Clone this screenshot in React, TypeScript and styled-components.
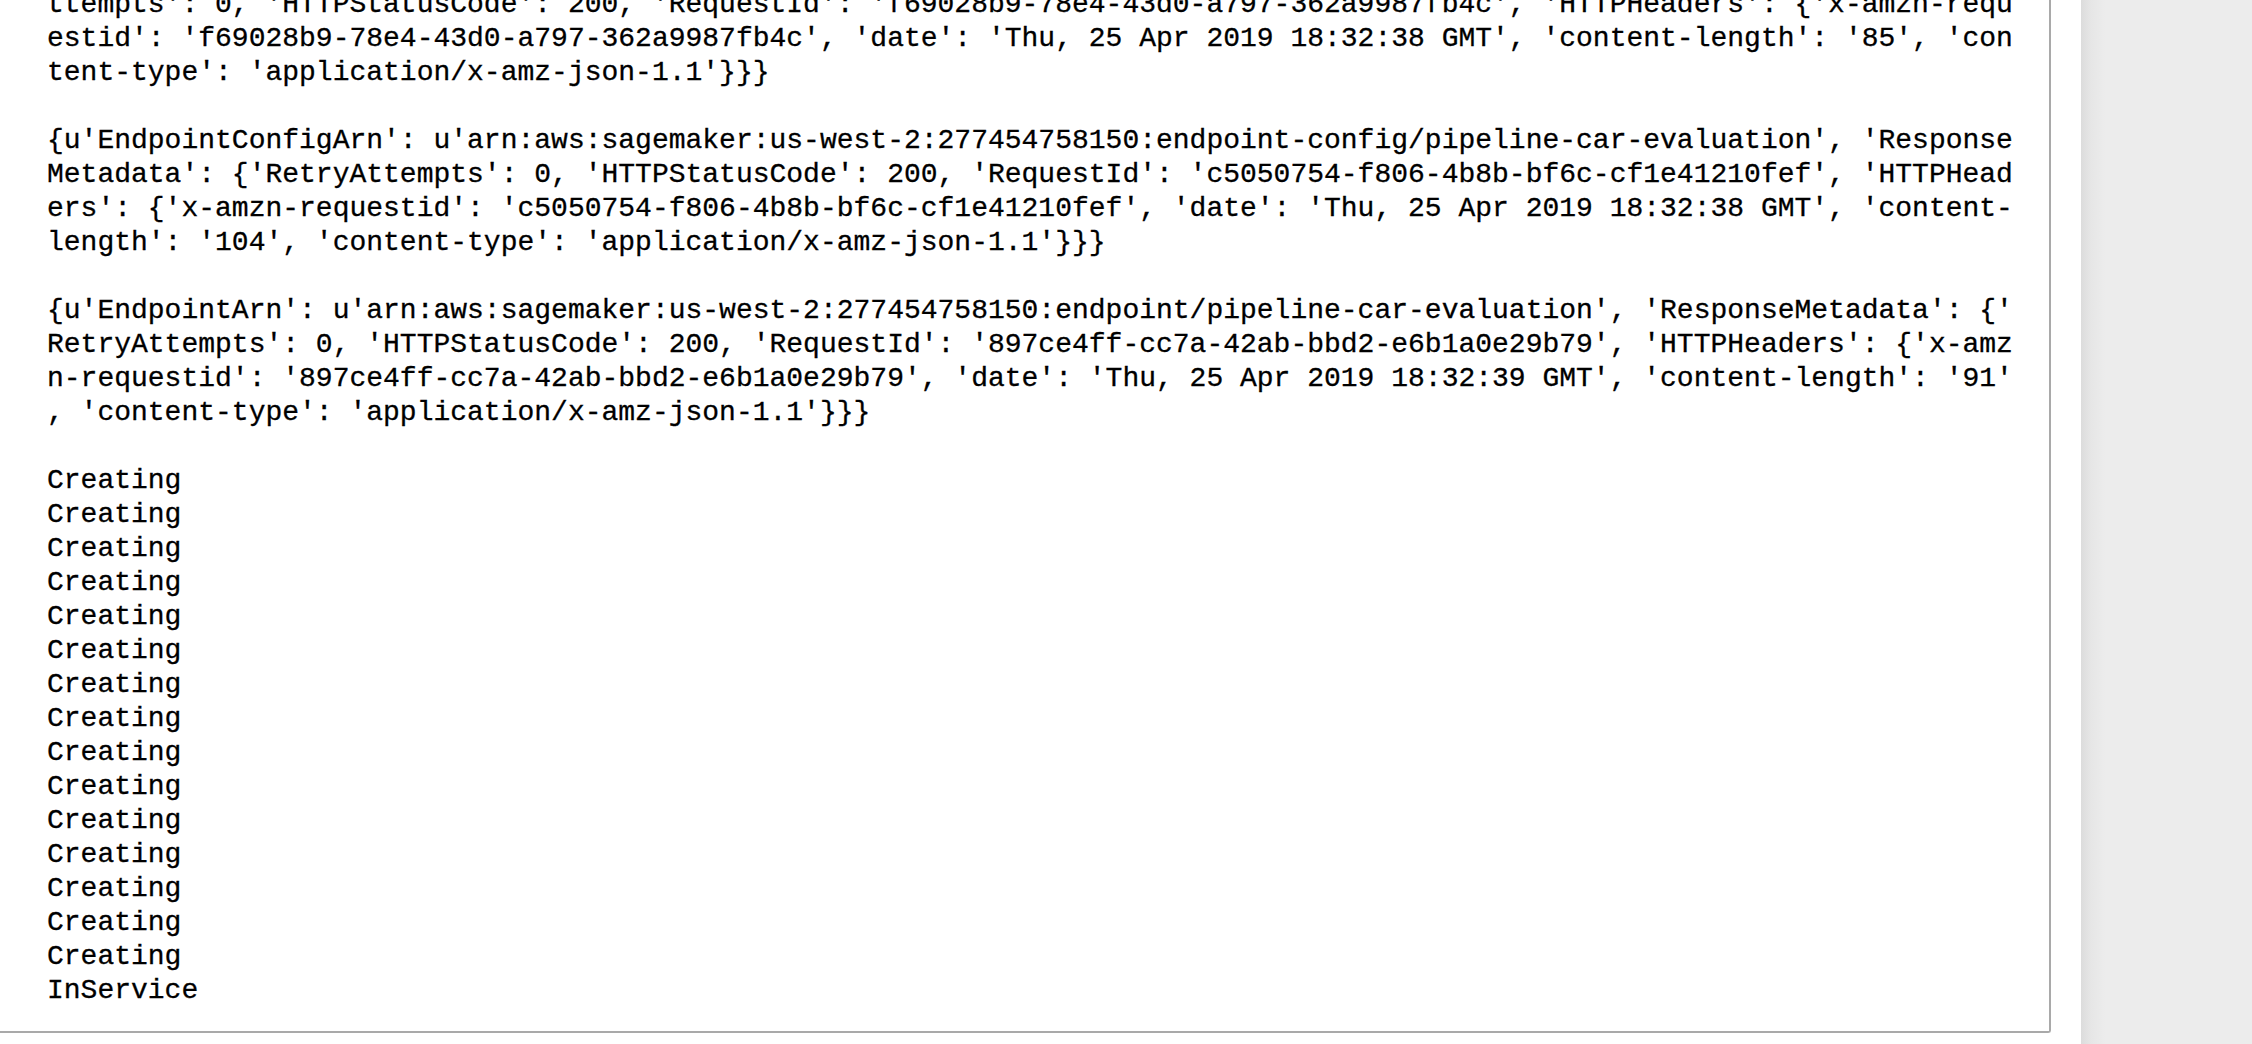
import React from "react";
import styled, { createGlobalStyle } from "styled-components";

const GlobalStyle = createGlobalStyle`
  html, body {
    margin: 0;
    padding: 0;
    background: #ffffff;
    overflow: hidden;
  }
`;

const Page = styled.div`
  display: flex;
  flex-direction: row;
  width: 2252px;
  height: 1044px;
  background: #ffffff;
  overflow: hidden;
`;

const OutputPanel = styled.section`
  flex: 0 0 2051px;
  height: 1033px;
  box-sizing: border-box;
  border-right: 2px solid #a9a9a9;
  border-bottom: 2px solid #a9a9a9;
  border-bottom-right-radius: 3px;
  background: #ffffff;
  overflow: hidden;
`;

const OutputScroll = styled.div`
  display: flex;
  flex-direction: column;
  gap: 34px;
  margin-top: -12px;
  padding-left: 47px;
`;

const OutputBlock = styled.pre`
  margin: 0;
  font-family: "Liberation Mono", "Courier New", monospace;
  font-size: 28px;
  line-height: 34px;
  color: #000000;
  white-space: pre;
  -webkit-text-stroke: 0.3px #000000;
`;

const Gutter = styled.div`
  flex: 0 0 30px;
`;

const SideBar = styled.aside`
  flex: 1 1 auto;
  height: 100%;
  background: linear-gradient(to right, #dcdcdc 0px, #e6e6e6 10px, #ececec 24px, #ececec 100%);
`;

const blocks: string[][] = [
  [
    "ttempts': 0, 'HTTPStatusCode': 200, 'RequestId': 'f69028b9-78e4-43d0-a797-362a9987fb4c', 'HTTPHeaders': {'x-amzn-requ",
    "estid': 'f69028b9-78e4-43d0-a797-362a9987fb4c', 'date': 'Thu, 25 Apr 2019 18:32:38 GMT', 'content-length': '85', 'con",
    "tent-type': 'application/x-amz-json-1.1'}}}",
  ],
  [
    "{u'EndpointConfigArn': u'arn:aws:sagemaker:us-west-2:277454758150:endpoint-config/pipeline-car-evaluation', 'Response",
    "Metadata': {'RetryAttempts': 0, 'HTTPStatusCode': 200, 'RequestId': 'c5050754-f806-4b8b-bf6c-cf1e41210fef', 'HTTPHead",
    "ers': {'x-amzn-requestid': 'c5050754-f806-4b8b-bf6c-cf1e41210fef', 'date': 'Thu, 25 Apr 2019 18:32:38 GMT', 'content-",
    "length': '104', 'content-type': 'application/x-amz-json-1.1'}}}",
  ],
  [
    "{u'EndpointArn': u'arn:aws:sagemaker:us-west-2:277454758150:endpoint/pipeline-car-evaluation', 'ResponseMetadata': {'",
    "RetryAttempts': 0, 'HTTPStatusCode': 200, 'RequestId': '897ce4ff-cc7a-42ab-bbd2-e6b1a0e29b79', 'HTTPHeaders': {'x-amz",
    "n-requestid': '897ce4ff-cc7a-42ab-bbd2-e6b1a0e29b79', 'date': 'Thu, 25 Apr 2019 18:32:39 GMT', 'content-length': '91'",
    ", 'content-type': 'application/x-amz-json-1.1'}}}",
  ],
  [...Array.from({ length: 15 }, () => "Creating"), "InService"],
];

export default function App() {
  return (
    <>
      <GlobalStyle />
      <Page>
        <OutputPanel>
          <OutputScroll>
            {blocks.map((lines, i) => (
              <OutputBlock key={i}>{lines.join("\n")}</OutputBlock>
            ))}
          </OutputScroll>
        </OutputPanel>
        <Gutter />
        <SideBar />
      </Page>
    </>
  );
}
